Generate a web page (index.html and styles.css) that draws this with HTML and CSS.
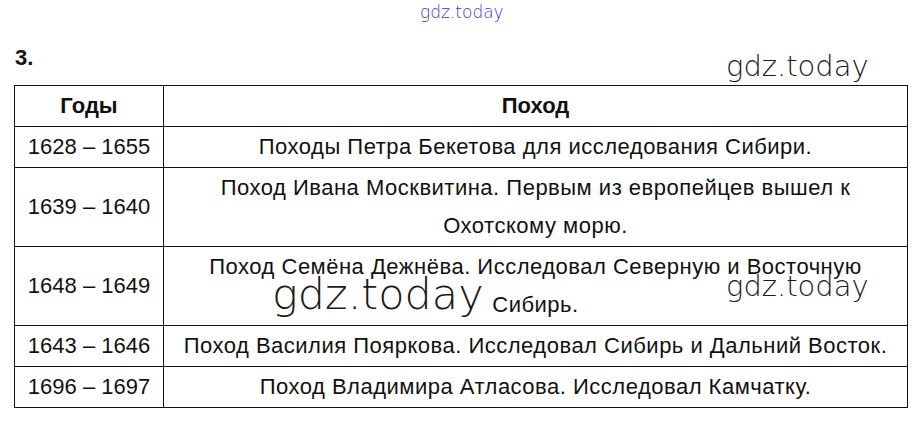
FILE: index.html
```html
<!DOCTYPE html>
<html lang="ru">
<head>
<meta charset="utf-8">
<link rel="stylesheet" href="styles.css">
</head>
<body>
<div class="page">
  <div class="wm wm-top">gdz.today</div>
  <div class="num">3.</div>
  <table class="tbl">
    <tr class="head"><th class="c1">Годы</th><th class="c2">Поход</th></tr>
    <tr><td class="c1">1628 – 1655</td><td class="c2">Походы Петра Бекетова для исследования Сибири.</td></tr>
    <tr><td class="c1">1639 – 1640</td><td class="c2">Поход Ивана Москвитина. Первым из европейцев вышел к<br>Охотскому морю.</td></tr>
    <tr><td class="c1">1648 – 1649</td><td class="c2">Поход Семёна Дежнёва. Исследовал Северную и Восточную<br>Сибирь.</td></tr>
    <tr><td class="c1">1643 – 1646</td><td class="c2">Поход Василия Пояркова. Исследовал Сибирь и Дальний Восток.</td></tr>
    <tr><td class="c1">1696 – 1697</td><td class="c2">Поход Владимира Атласова. Исследовал Камчатку.</td></tr>
  </table>
  <div class="wm wm-r1">gdz.today</div>
  <div class="wm wm-mid">gdz.today</div>
  <div class="wm wm-r2">gdz.today</div>
</div>
</body>
</html>
```
FILE: styles.css
```css
html, body { margin: 0; padding: 0; background: #fff; }
.page {
  position: relative;
  width: 922px;
  height: 421px;
  padding: 44px 14px 0 14px;
  box-sizing: border-box;
  font-family: "Liberation Sans", Arial, sans-serif;
  color: #111;
}
.num {
  font-weight: bold;
  font-size: 22px;
  line-height: 28px;
  height: 41px;
  padding-left: 1px;
}
.tbl {
  border-collapse: collapse;
  width: 894px;
  font-size: 22px;
}
.tbl th, .tbl td {
  border: 1px solid #111;
  text-align: center;
  line-height: 38px;
  padding: 1px 2px;
  font-weight: normal;
  white-space: nowrap;
}
.tbl th { font-weight: bold; }
.tbl td.c2 { letter-spacing: 0.5px; }
.c1 { width: 144px; }
.wm {
  position: absolute;
  font-family: "DejaVu Sans ExtraLight", "DejaVu Sans", sans-serif;
  font-weight: 200;
  line-height: 1;
  color: #1a1a1a;
  white-space: nowrap;
}
.wm-top { left: 420px; top: 4px; font-size: 17px; color: #3a3ad8; }
.wm-r1 { left: 726px; top: 52px; font-size: 29px; }
.wm-mid { left: 272px; top: 273px; font-size: 43px; }
.wm-r2 { left: 726px; top: 272px; font-size: 29px; }
```
